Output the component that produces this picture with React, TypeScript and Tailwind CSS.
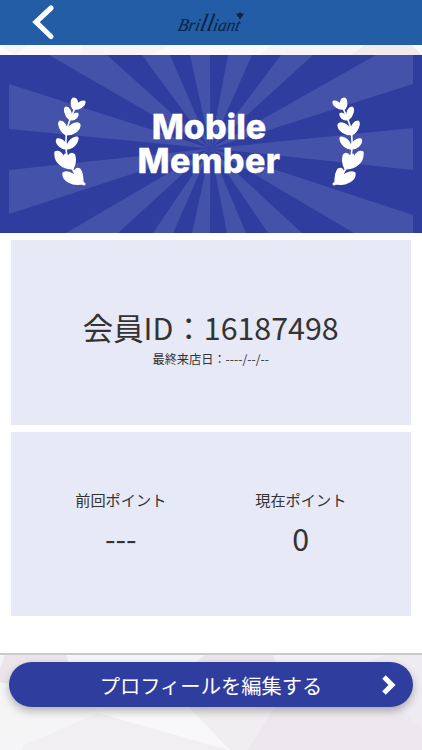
import type { ReactNode } from "react";

interface PointProps {
  label: string;
  value: string;
}

const rays = [
  "49,0 107,0",
  "142,0 170,0",
  "190,0 210,0",
  "228,0 252,0",
  "281,0 313,0",
  "376,0 413,0 413,29",
  "413,73 413,115",
  "413,160 413,178 354,178",
  "302,178 268,178",
  "246,178 227,178",
  "210,178 192,178",
  "173,178 153,178",
  "118,178 66,178",
  "9,159 9,115",
  "9,74 9,29",
];

function Laurel({ flip = false }: { flip?: boolean }) {
  return (
    <svg
      viewBox="0 0 32 90"
      className={flip ? "h-[90px] w-8 -scale-x-100" : "h-[90px] w-8"}
      fill="white"
      stroke="white"
      strokeWidth="1.2"
      strokeLinejoin="round"
      aria-hidden="true"
    >
      <path
        d="M21 12C16 24 12 31 12 44C11 60 15 73 30 88"
        fill="none"
        strokeWidth="1.6"
      />
      <path d="M19 13C16 9 17 2 20 2C23 2 24 6 23 9C25 5 31 4 31 6C31 10 25 14 19 13Z" />
      <path d="M15 23C11 20 9 12 12 11C15 11 18 16 17 20C20 17 25 16 24 19C23 23 19 25 15 23Z" />
      <path d="M12 39C6 36 3 27 6 25C10 25 13 30 13 34C17 27 25 25 26 29C26 35 19 39 12 39Z" />
      <path d="M12 53C5 52 1 46 3 43C7 42 12 46 13 50C15 43 23 39 24 42C24 48 18 53 12 53Z" />
      <path d="M19 73C7 73 0 65 1 56C5 54 9 58 10 62L11 58L14 60C17 56 21 57 21 61C22 65 21 69 19 73Z" />
      <path d="M28 88C18 90 8 84 9 77C12 75 18 76 21 80C19 74 22 71 26 73C29 77 29 82 29 86L31 88L30 89Z" />
    </svg>
  );
}

function Card({ children }: { children: ReactNode }) {
  return <section className="ml-[10.5px] mr-[11px] bg-[#e7e9f6]">{children}</section>;
}

function Point({ label, value }: PointProps) {
  return (
    <div className="flex w-[180px] flex-col items-center">
      <span className="text-[15.200px] leading-[22px]">{label}</span>
      <span className="mt-[6px] text-[30.400px] leading-[44px]">{value}</span>
    </div>
  );
}

export default function App() {
  return (
    <div className="flex h-[750px] w-full flex-col overflow-hidden bg-[#f5f3f6] font-['Noto_Sans_CJK_JP',sans-serif] text-[#333]">
      {/* Header */}
      <header className="flex h-[45px] shrink-0 items-start bg-[#235da5]">
        <button aria-label="戻る" className="ml-[32px] mt-[3px]">
          <svg width="24" height="38" viewBox="0 0 24 38" fill="none">
            <path
              d="M19 5L4 19L19 33.500"
              stroke="white"
              strokeWidth="5.200"
              strokeLinecap="round"
            />
          </svg>
        </button>
        <svg
          className="ml-[120px] mt-[8px]"
          width="72"
          height="30"
          viewBox="0 0 72 30"
          fill="#0a2347"
        >
          <text
            x="0"
            y="23"
            transform="translate(6 0) skewX(-12)"
            fontFamily="Liberation Serif, serif"
            fontStyle="italic"
            fontSize="18"
            textLength="62"
            lengthAdjust="spacingAndGlyphs"
          >
            Bri<tspan fontSize="25">ll</tspan>iant
          </text>
          <path d="M60 5L62 6L64 4L66 6L68 5L66 9H62ZM63 9H65V11H63Z" />
        </svg>
      </header>

      {/* Faceted strip */}
      <svg className="h-[10px] w-full shrink-0" viewBox="0 0 422 10">
        <path d="M0 0H422V10H0Z" fill="#fbf9fb" />
        <path d="M0 0H28L15 10L0 0M82 0H170L150 10H80Z" fill="#f8f3f6" />
        <path d="M270 0H362L350 10H260Z" fill="#f7f4f7" />
        <path d="M365 0H412L422 10H350Z" fill="#f1ebf0" />
      </svg>

      <main className="flex h-[598px] shrink-0 flex-col bg-white">
        {/* Member banner */}
        <div className="grid h-[178px] shrink-0">
          <svg
            className="col-start-1 row-start-1 h-[178px] w-full bg-[#2f3d9f]"
            viewBox="0 0 422 178"
            aria-hidden="true"
          >
            {rays.map((points) => (
              <polygon key={points} points={`210.500,93.500 ${points}`} fill="#4552aa" />
            ))}
          </svg>
          <div className="z-10 col-start-1 row-start-1 flex items-start justify-between pl-[54px] pr-[58px] pt-[41px]">
            <Laurel />
            <h2 className="mt-[14px] text-center font-[Inter,sans-serif] text-[34px] font-extrabold leading-[34px] text-white [-webkit-text-stroke:0.3px_white]">
              <span className="block">Mobile</span>
              <span className="block tracking-[0.4px]">Member</span>
            </h2>
            <Laurel flip />
          </div>
        </div>

        <div className="mt-[7px] flex flex-col gap-[7px]">
          <Card>
            <div className="flex h-[185px] flex-col items-center pt-[65px]">
              <h1 className="text-[30.400px] leading-[44px]">会員ID：16187498</h1>
              <p className="mt-px text-[12.200px] leading-[18px]">最終来店日：----/--/--</p>
            </div>
          </Card>
          <Card>
            <div className="flex h-[184px] justify-center pt-[56px]">
              <Point label="前回ポイント" value="---" />
              <Point label="現在ポイント" value="0" />
            </div>
          </Card>
        </div>
      </main>

      {/* Profile action */}
      <footer className="grid h-[97px] border-t-2 border-[#cbc9cb]">
        <svg
          className="col-start-1 row-start-1 h-[95px] w-full"
          viewBox="0 0 422 95"
          aria-hidden="true"
        >
          <path d="M0 0H422V95H0Z" fill="#f5f4f6" />
          <path d="M5 0H66L75 28H0V13Z" fill="#ebe5ea" />
          <path d="M0 27L50 50L22 91L0 78Z" fill="#f6f5f6" />
          <path d="M22 95V91L98 58L228 95Z" fill="#f1eff2" />
          <path d="M98 58L90 48H185L230 95Z" fill="#f8f7fa" />
          <path d="M185 48H277L247 95H230Z" fill="#f1eef1" />
          <path d="M205 0H273L278 12H190Z" fill="#ebe5ea" />
          <path d="M273 0H383L360 25L278 12Z" fill="#f3f1f3" />
          <path d="M277 48H422V95H247Z" fill="#ece8ed" />
          <path d="M383 0H422V75L398 51L360 12Z" fill="#eeebf1" />
        </svg>
        <button className="z-10 col-start-1 row-start-1 mx-[9px] mt-[7px] flex h-[45px] items-center justify-center rounded-full bg-[#2f3d9f] pl-[33px] text-[20.300px] text-white shadow-[0_4px_9px_rgba(0,0,0,0.28)]">
          <span className="flex-1 pt-[2px] text-center">プロフィールを編集する</span>
          <svg className="mr-[15px]" width="18" height="22" viewBox="0 0 18 22" fill="none">
            <path d="M4 3L12 11L4 19" stroke="white" strokeWidth="5" />
          </svg>
        </button>
      </footer>
    </div>
  );
}
